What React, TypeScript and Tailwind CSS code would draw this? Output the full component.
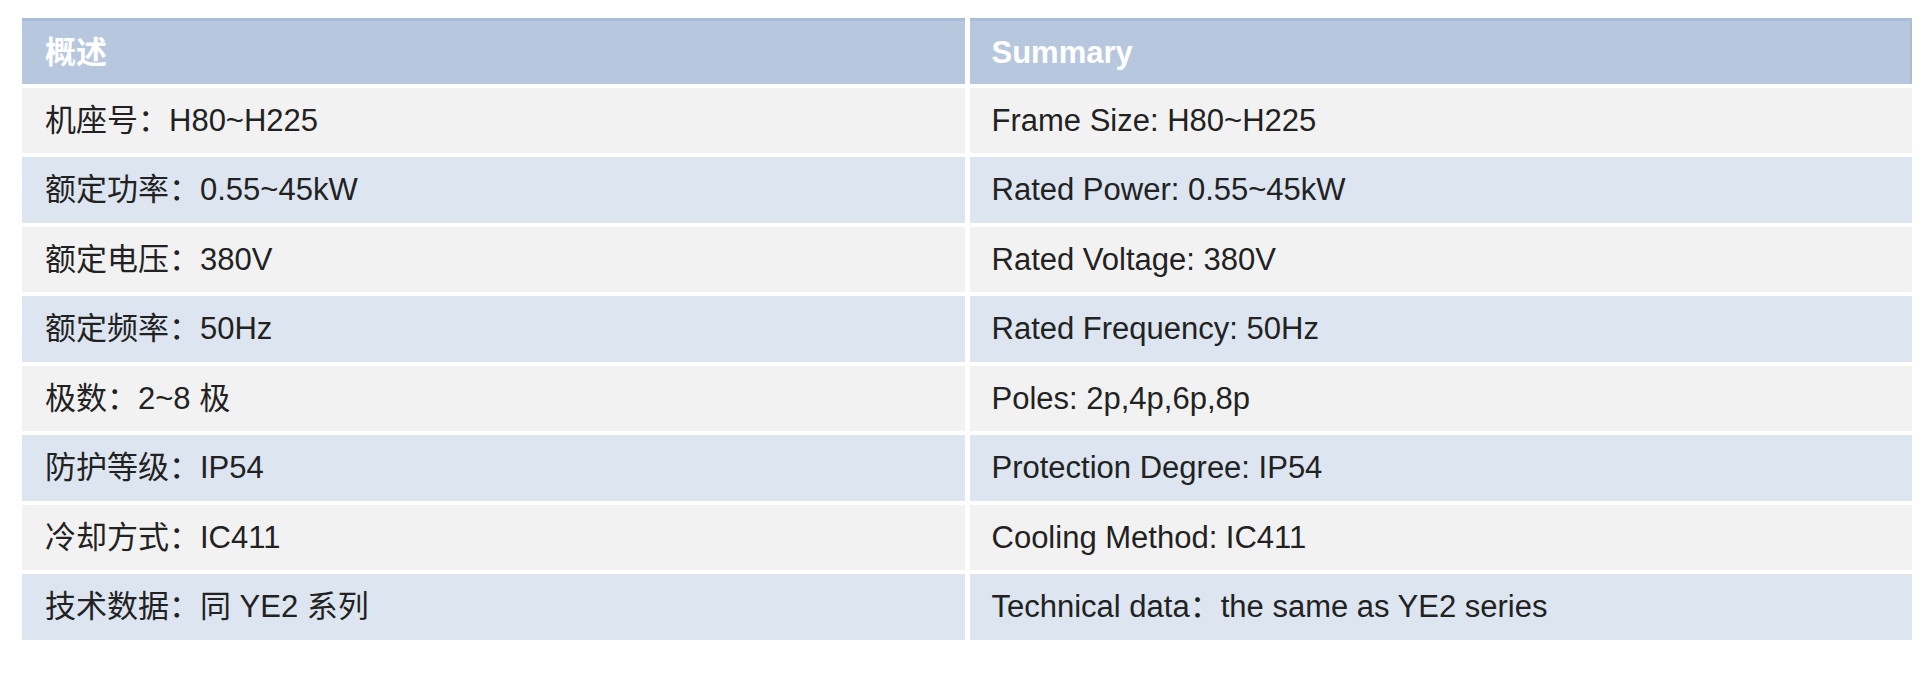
const rows: [string, string][] = [
  ["机座号：H80~H225", "Frame Size: H80~H225"],
  ["额定功率：0.55~45kW", "Rated Power: 0.55~45kW"],
  ["额定电压：380V", "Rated Voltage: 380V"],
  ["额定频率：50Hz", "Rated Frequency: 50Hz"],
  ["极数：2~8 极", "Poles: 2p,4p,6p,8p"],
  ["防护等级：IP54", "Protection Degree: IP54"],
  ["冷却方式：IC411", "Cooling Method: IC411"],
  ["技术数据：同 YE2 系列", "Technical data：the same as YE2 series"],
];

const font = {
  fontFamily: '"Liberation Sans", Arial, "Noto Sans CJK SC", sans-serif',
};

export default function App() {
  return (
    <div className="h-[694px] w-[1928px] bg-white pl-[22px] pr-[16px] pt-[18px]" style={font}>
      <div className="grid grid-cols-2 gap-x-[5px] gap-y-[4px] text-[31px] leading-none">
        <div className="flex h-[65.5px] items-center border-t-[3px] border-[#a9bdd8] bg-[#b7c8de] pl-[23px] font-bold text-white">
          概述
        </div>
        <div className="flex h-[65.5px] items-center border-t-[3px] border-r-2 border-[#a9bdd8] bg-[#b7c8de] pl-[22px] font-bold text-white">
          Summary
        </div>
        {rows.map(([zh, en], i) => {
          const bg = i % 2 === 0 ? "bg-[#f2f2f2]" : "bg-[#dce5f0]";
          return [
            <div
              key={`zh-${i}`}
              className={`flex h-[65.5px] items-center pl-[23px] text-[#222222] ${bg}`}
            >
              {zh}
            </div>,
            <div
              key={`en-${i}`}
              className={`flex h-[65.5px] items-center pl-[22px] text-[#222222] ${bg}`}
            >
              {en}
            </div>,
          ];
        })}
      </div>
    </div>
  );
}
